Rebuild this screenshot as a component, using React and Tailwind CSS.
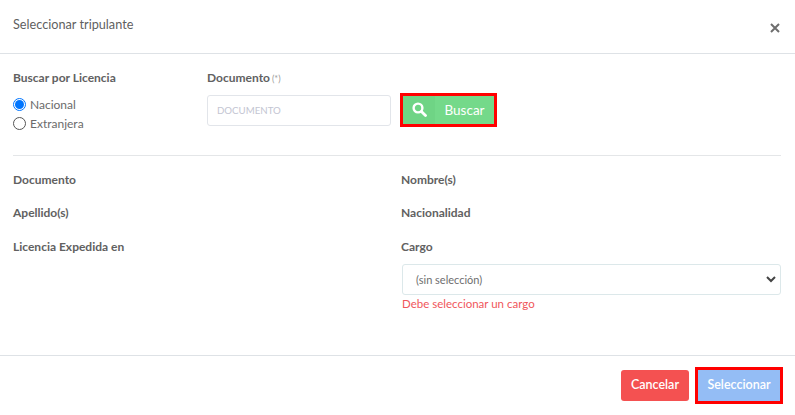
import React from "react";

function Field({ children, className = "h-[33.5px]" }) {
  return <div className={`${className} text-[12px] font-bold leading-[18px] text-[#616161]`}>{children}</div>;
}

function Radio({ checked, label }) {
  return (
    <label className="flex h-[19px] items-center gap-[4px] text-[12px] text-[#6b6b6b]">
      <span className={`flex h-[13px] w-[13px] items-center justify-center rounded-full border bg-white ${checked ? "border-[#0075ff]" : "border-[#555555]"}`}>
        {checked && <span className="h-[9px] w-[9px] rounded-full bg-[#0075ff]" />}
      </span>
      {label}
    </label>
  );
}

export default function App() {
  return (
    <div className="flex h-[415px] w-[795px] flex-col bg-white font-['Lato','Noto_Sans',sans-serif]">
      <header className="flex h-[54px] shrink-0 items-center justify-between border-b border-[#dee2e6] pl-[13px] pr-[15px]">
        <h1 className="-mt-[4px] text-[12.7px] font-normal text-[#5f5f5f]">Seleccionar tripulante</h1>
        <svg width="10" height="10" viewBox="0 0 10 10" className="mt-[3px]">
          <path d="M1 1 L9 9 M9 1 L1 9" stroke="#6e6e6e" strokeWidth="2" />
        </svg>
      </header>

      <main className="flex-1 pl-[13px] pr-[14px] pt-[15px]">
        <section className="flex h-[87px] border-b border-[#e4e6e8]">
          <div className="w-[194px] shrink-0">
            <Field className="mb-[8px] h-[18px]">Buscar por Licencia</Field>
            <Radio checked label="Nacional" />
            <Radio label="Extranjera" />
          </div>
          <div className="w-[184px] shrink-0">
            <Field className="mb-[8px] h-[18px]">
              Documento<span className="ml-[2px] text-[9px] font-normal text-[#9a9a9a]">(*)</span>
            </Field>
            <input
              readOnly
              placeholder="DOCUMENTO"
              className="h-[31px] w-[184px] rounded-[3px] border border-[#e2e5ea] bg-white px-[9px] pb-[2px] text-[9.7px] outline-none placeholder:text-[#c3c5d2]"
            />
          </div>
          <button className="ml-[9px] mt-[24px] flex h-[34px] w-[97px] items-stretch border-[3px] border-[#ff0000] bg-[#74d98a] text-[13.5px] text-white">
            <span className="flex w-[32px] items-center justify-center bg-[#6fd485]">
              <svg width="15" height="15" viewBox="0 0 15 15" fill="none" className="-mt-[1px]">
                <circle cx="6" cy="6" r="4.4" stroke="white" strokeWidth="2.4" />
                <path d="M9.4 9.4 L13.5 13.5" stroke="white" strokeWidth="2.8" strokeLinecap="round" />
              </svg>
            </span>
            <span className="flex flex-1 items-center justify-center">Buscar</span>
          </button>
        </section>

        <section className="grid grid-cols-[388px_1fr] pt-[15px]">
          <div>
            <Field className="h-[33px]">Documento</Field>
            <Field className="h-[34px]">Apellido(s)</Field>
            <Field>Licencia Expedida en</Field>
          </div>
          <div>
            <Field className="h-[33px]">Nombre(s)</Field>
            <Field className="h-[34px]">Nacionalidad</Field>
            <Field className="h-[26px]">Cargo</Field>
            <div className="relative ml-[1px] flex h-[31px] items-center rounded-[3px] border border-[#dce8ea] bg-white pl-[13px] pt-[1px] text-[11px] text-[#6e6e6e]">
              (sin selección)
              <svg width="10" height="7" viewBox="0 0 10 7" className="absolute right-[4px] top-[11px]">
                <path d="M1 1 L5 5 L9 1" fill="none" stroke="#444444" strokeWidth="2" />
              </svg>
            </div>
            <p className="ml-[1px] text-[11.5px] leading-[18px] text-[#f0565b]">Debe seleccionar un cargo</p>
          </div>
        </section>
      </main>

      <footer className="flex h-[60px] shrink-0 items-center justify-end gap-[6px] border-t border-[#dee2e6] pr-[12px]">
        <button className="h-[31px] w-[68px] rounded-[3px] bg-[#f45151] text-[12.5px] font-semibold text-white">Cancelar</button>
        <button className="h-[37px] w-[88px] border-[3px] border-[#ff0000] bg-[#94bdf5] text-[12.5px] font-semibold text-white">Seleccionar</button>
      </footer>
    </div>
  );
}
